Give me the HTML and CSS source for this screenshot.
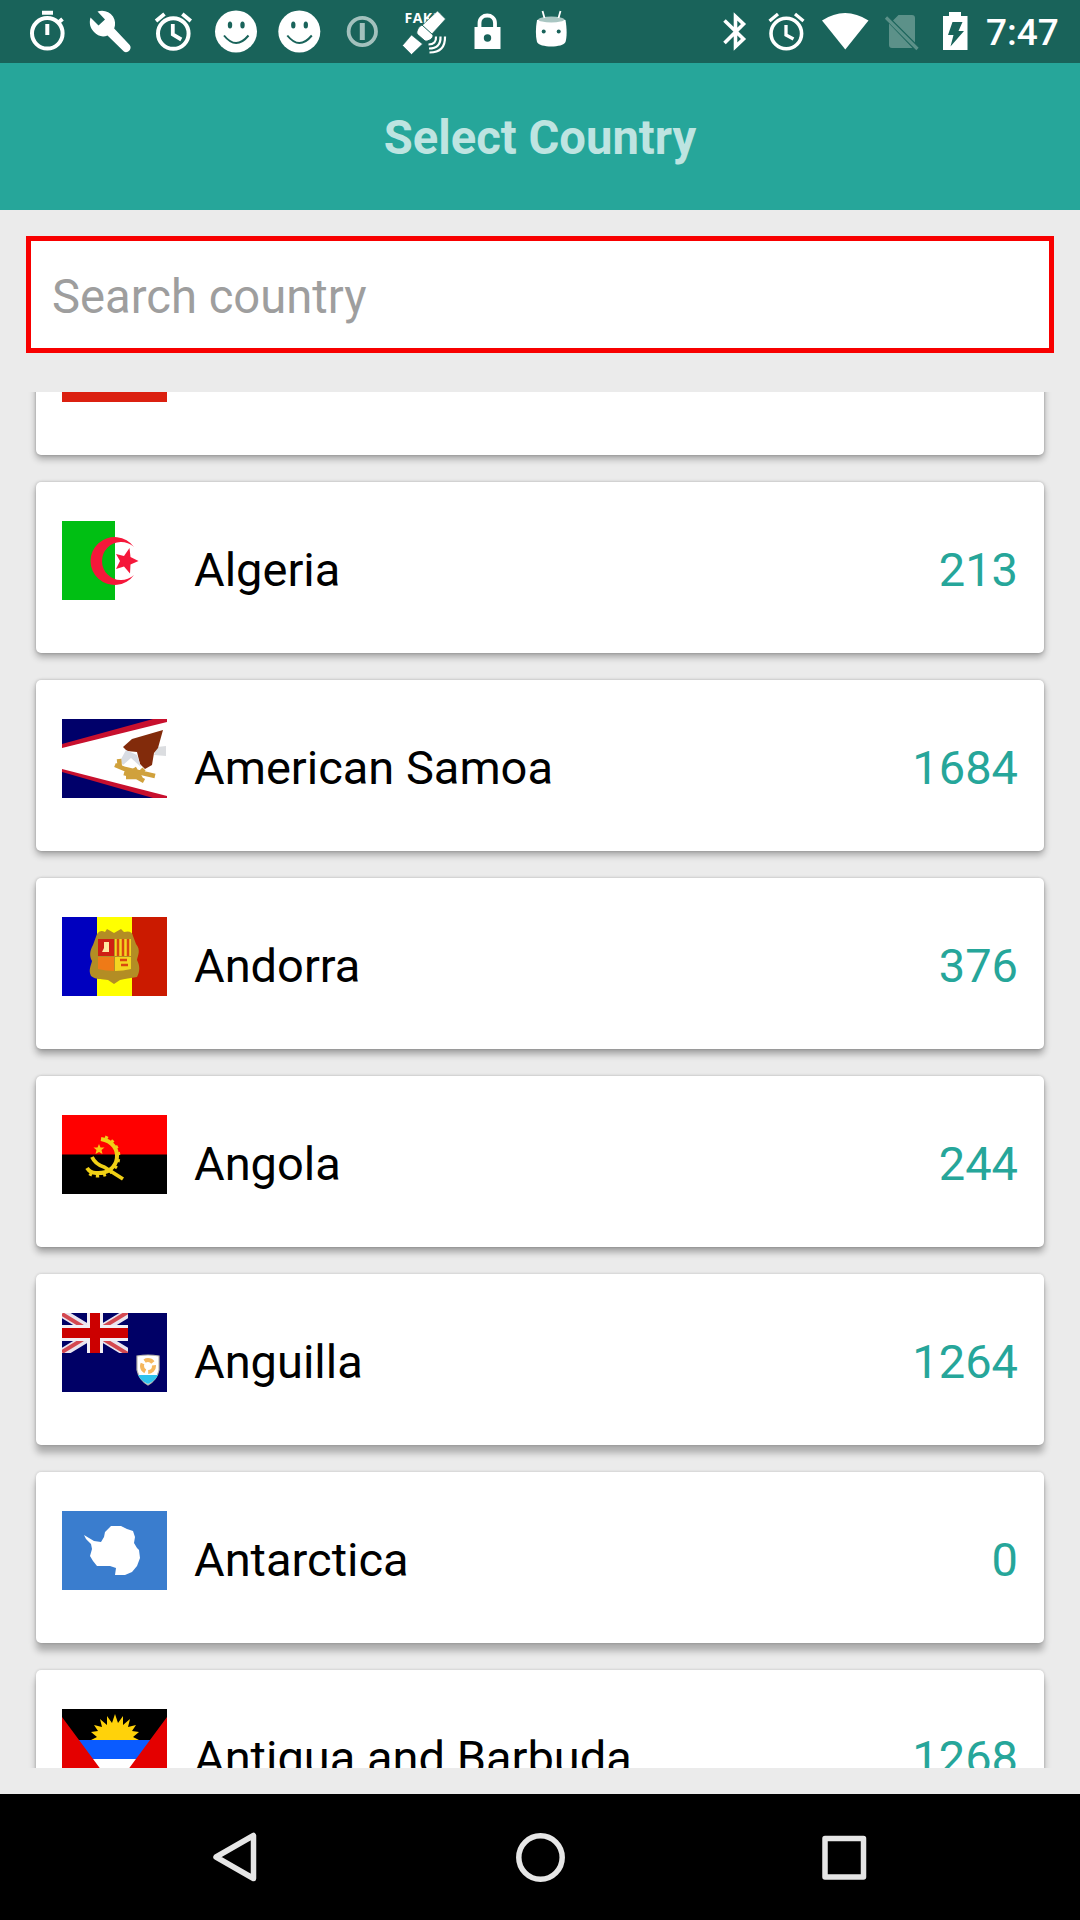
FILE: index.html
```html
<!DOCTYPE html>
<html lang="en">
<head>
<meta charset="utf-8">
<title>Select Country</title>
<link rel="stylesheet" href="styles.css">
</head>
<body>
<div class="statusbar">
  <div class="notifications">
    <svg viewBox="16 0 63 63" fill="none" stroke="#fff"><circle cx="47.3" cy="33.3" r="15.3" stroke-width="4"/><path d="M42 12.8h11M47.3 24v11M59 22l3.500-3" stroke-width="4"/></svg>
    <svg viewBox="79 0 63 63"><path fill="#fff" d="M97.500 11.500c6-2 12 0 15.500 5 2.400 4 2.700 8 1.200 12l15.500 16.500c3 3.500-2 9-5.800 6.500L107.500 35.500c-5 2-10 .5-13.500-3.500-4-4.300-5-9-3.500-14.500l8 8 6.500-6z"/></svg>
    <svg viewBox="142 0 63 63" fill="none" stroke="#fff"><circle cx="173.300" cy="33.500" r="15.300" stroke-width="4"/><path d="M172.800 24v10.500l8.500 5M156 21l8.500-7M190.800 21l-8.500-7" stroke-width="3.800"/></svg>
    <svg viewBox="205 0 63 63"><circle cx="236" cy="31.500" r="21" fill="#fff"/><g fill="#19635a"><ellipse cx="230" cy="25" rx="2.200" ry="3.500"/><ellipse cx="242.500" cy="25" rx="2.200" ry="3.500"/></g><path d="M224 35.500q12 15 24.500 0" fill="none" stroke="#19635a" stroke-width="2"/></svg>
    <svg viewBox="268 0 63 63"><circle cx="299.300" cy="31.500" r="21" fill="#fff"/><g fill="#19635a"><ellipse cx="293.300" cy="25" rx="2.200" ry="3.500"/><ellipse cx="305.800" cy="25" rx="2.200" ry="3.500"/></g><path d="M287.300 35.500q12 15 24.500 0" fill="none" stroke="#19635a" stroke-width="2"/></svg>
    <svg viewBox="331 0 63 63" fill="none" stroke="#a3c1bd"><circle cx="362.300" cy="31.500" r="13.700" stroke-width="3.800"/><path d="M362.300 23v17" stroke-width="5"/></svg>
    <svg viewBox="394 0 63 63"><text class="fake" x="404.500" y="23" textLength="36">FAKE</text><g stroke="#19635a" fill="#fff"><path d="M437.500 11l8 8-14.500 16-9.500-9zM411.500 35l11 9-11 10.500-9-9z" stroke-width=".6"/><path d="M422 25l11 10c1 3-5 7-8 6l-8-7c-1-3 2-8 5-9z" stroke-width="1"/></g><path d="M428.500 44.500q8 0 7.500-8M429 48.500q12 0 11.500-12M429.500 52.500q16 0 15.500-16" fill="none" stroke="#fff" stroke-width="2.200"/></svg>
    <svg viewBox="457 0 63 63"><path d="M479.500 29v-6c0-10 15.500-10 15.500 0v6" fill="none" stroke="#fff" stroke-width="3.800"/><path d="M474.500 27h26v22h-26z" fill="#fff"/><circle cx="487.500" cy="38" r="3.700" fill="#19635a"/></svg>
    <svg viewBox="520 0 63 63"><path d="M537 20q14.500-5 28.500 0c1.500 9 1.500 17 0 22-2.500 6-26 6-28.500 0-1.500-6-1.500-14 0-22z" fill="#fff"/><ellipse cx="551.300" cy="19.500" rx="13" ry="3" fill="#a9c6c2"/><path d="M544.500 18l-2-7M558.500 18l2-7" stroke="#fff" stroke-width="1.800"/><g fill="#19635a"><circle cx="543.700" cy="31.500" r="2"/><circle cx="558.700" cy="31.500" r="2"/></g></svg>
  </div>
  <div class="system">
    <svg class="w50" viewBox="710 0 50 63" fill="none" stroke="#fff" stroke-width="3.600"><path d="M724.500 20.500L743.500 39l-8 7.500v-30l8 7.500-19 19"/></svg>
    <svg class="w52" viewBox="760 0 52 63" fill="none" stroke="#fff"><circle cx="786.300" cy="33.500" r="15.300" stroke-width="3.600"/><path d="M786 25v10l7.500 4M769.500 21l8.500-7M803.500 21l-8.500-7" stroke-width="3.300"/></svg>
    <svg class="w64" viewBox="812 0 64 63"><path d="M822 20.500q23-15 46.500 0L845.300 49.500z" fill="#fff"/></svg>
    <svg class="w54" viewBox="876 0 54 63"><path d="M898.500 15H912q3 0 3 3v24.500L893 20.500zM889 23.500L912.500 48H892q-3 0-3-3z" fill="#5c9189"/><path d="M886 17.500l31.500 31.500" stroke="#5c9189" stroke-width="3.200"/></svg>
    <svg class="w50" viewBox="930 0 50 63"><path d="M943 16h6v-4h12v4h6.500v34H943z" fill="#fff"/><path d="M952.500 22h10l-4 9h5.500l-13.500 15.500 3-11.500H948z" fill="#19635a"/></svg>
    <span class="clock">7:47</span>
  </div>
</div>
<header class="header">Select Country</header>
<main class="content">
  <input class="search" type="text" placeholder="Search country">
  <div class="list">
    <div class="track">
      <div class="card"><svg class="flag" viewBox="0 0 105 79"><path fill="#db2010" d="M0 0h105v79H0z"/></svg></div>
      <div class="card">
        <svg class="flag" viewBox="0 0 105 79"><path fill="#fff" d="M0 0h105v79H0z"/><path fill="#00bf13" d="M0 0h53v79H0z"/><path fill="#f5173a" d="M72 26A24 24 0 1 0 72 54A19.060 19.060 0 1 1 72 26zM67.500 27l1 9 8 4-8 3.500-.5 9-6-7-8 2.500 4-8-4-7 8 2z"/></svg>
        <span class="name">Algeria</span><span class="code">213</span>
      </div>
      <div class="card">
        <svg class="flag" viewBox="0 0 105 79"><path fill="#00006a" d="M0 0h105v79H0z"/><path fill="#c8102e" d="M105 0H91L0 25v28l91 26h14z"/><path fill="#fff" d="M105 3L0 29v21l105 27z"/><path fill="#dbdde0" d="M95 28l9-1v10l-12-1z"/><path fill="#822b0b" d="M101 11L96 29 92 34 90 46 83 50 78 45 75 33 65 32 61 28 70 20z"/><path fill="#d8dce3" d="M64 31l11 5 4 12-10-9-8 7-3-4z"/><path fill="none" stroke="#d0a13c" stroke-width="4.500" d="M53 46l10 4 30 7M62 54l11 3 9 5M64 58l10 0 8-8M72 49l7 11M57 40l1 9"/></svg>
        <span class="name">American Samoa</span><span class="code">1684</span>
      </div>
      <div class="card">
        <svg class="flag" viewBox="0 0 105 79"><path fill="#0000bf" d="M0 0h35v79H0z"/><path fill="#ff0" d="M35 0h35v79H35z"/><path fill="#cb1a00" d="M70 0h35v79H70z"/><path fill="#b38d24" d="M35 17q3-5 8-2l2-3 7 4 7-4 3 3q8-2 9 4l3 8c5 6 2 11 1 16 3 6 3 11 0 17-6 1-13 2-17 3l-6 4-6-4c-5-1-12 0-17-4-3-6 0-10 1-15-3-5-2-11 1-16z"/><path fill="#cf1e13" d="M36 22h16v17H36z"/><path fill="#f4d521" d="M53 22h16v17H53zM53 40h16v12q-8 2-16 2z"/><path fill="#ef7a17" d="M36 40h16v14q-8 0-16-2z"/><path stroke="#d9480f" stroke-width="2.500" d="M56 22v17M61 22v17M66 22v17"/><path fill="none" stroke="#d9480f" stroke-width="2.500" d="M58 43h7M59 48h7"/><path fill="#ffe9a1" d="M42 25h5v10h-7l2-4z"/></svg>
        <span class="name">Andorra</span><span class="code">376</span>
      </div>
      <div class="card">
        <svg class="flag" viewBox="0 0 105 79"><path fill="#f00" d="M0 0h105v40H0z"/><path d="M0 39.500h105V79H0z"/><g fill="none" stroke="#f0d016"><path stroke-width="4" d="M39 24c24 4 20 36-5 34-4 0-7-2-9-5"/><path stroke-width="3.800" d="M30 42q3 7 12 10l19 12"/><path stroke-width="3" stroke-dasharray="3 4" d="M43 22c21 8 18 39-8 39-5 0-8-2-10-4"/></g><path fill="#f9c816" d="M37 29l1.500 3.500h4l-3 2.500 1 4-3.500-2-3.500 2 1-4-3-2.500h4z"/></svg>
        <span class="name">Angola</span><span class="code">244</span>
      </div>
      <div class="card">
        <svg class="flag" viewBox="0 0 105 79"><path fill="#006" d="M0 0h105v79H0z"/><svg width="66" height="40" viewBox="0 0 66 40"><path stroke="#e9e4ef" stroke-width="9" d="M0 0l66 40M66 0L0 40"/><path stroke="#d44850" stroke-width="4" d="M0 1l66 40M66-1L0 39"/><path stroke="#f2eef4" stroke-width="16" d="M33 0v40M0 20h66"/><path stroke="#c00" stroke-width="10" d="M33 0v40M0 20h66"/></svg><path fill="#fff" stroke="#b9b6ae" stroke-width="1.200" d="M75 43q11-2 22 0v14q-2 10-11 15-9-5-11-15z"/><path fill="#2fc3ee" d="M76 62h20q-3 6-10 9-7-3-10-9z"/><circle cx="86" cy="53" r="6" fill="none" stroke="#f5b75d" stroke-width="4" stroke-dasharray="9 3"/></svg>
        <span class="name">Anguilla</span><span class="code">1264</span>
      </div>
      <div class="card">
        <svg class="flag" viewBox="0 0 105 79"><path fill="#3a7dce" d="M0 0h105v79H0z"/><path fill="#fff" d="M22 24l10 6 7 1 3-5 1-5 6-6 10 0 6 3 6 2 2 6-1 6 3 5 2 2 1 8-3 8-5 6-7 3H53l1-7-6-2H35l-4-5-3-5 2-7-1-5-5-5z"/></svg>
        <span class="name">Antarctica</span><span class="code">0</span>
      </div>
      <div class="card">
        <svg class="flag" viewBox="0 0 105 79"><path d="M0 0h105v79H0z"/><path fill="#ffd20a" d="M29 31l6-3-6-5 7-1-4-6 8 2-2-8 7 6 0-9 5 7 3-9 3 9 5-7 0 9 7-6-2 8 8-2-4 6 7 1-6 5 6 3z"/><path fill="#0a5bff" d="M10 31h85v19H10z"/><path fill="#fff" d="M26 50h53v29H26z"/><path fill="#e40000" d="M0 8l52.500 71H0zM105 8l-52.500 71H105z"/></svg>
        <span class="name">Antigua and Barbuda</span><span class="code">1268</span>
      </div>
    </div>
  </div>
</main>
<nav class="navbar">
  <svg viewBox="0 0 60 60"><path d="M2.500 30L40 8.500v43z" transform="translate(7.500 0)"/></svg>
  <svg viewBox="0 0 60 60"><circle cx="30.500" cy="30.500" r="21.700"/></svg>
  <svg viewBox="0 0 60 60"><path d="M11 11.500h38.500v38.500h-38.500z"/></svg>
</nav>
</body>
</html>
```
FILE: styles.css
```css
* { box-sizing: border-box; }

body {
  margin: 0;
  width: 1080px;
  height: 1920px;
  overflow: hidden;
  display: flex;
  flex-direction: column;
  background: #ebebeb;
  font-family: Roboto, "Liberation Sans", sans-serif;
  color: #000;
}

svg { display: block; flex: none; }

.statusbar {
  height: 63px;
  flex: none;
  display: flex;
  justify-content: space-between;
  padding: 0 0 0 16px;
  background: #19635a;
}

.notifications,
.system { display: flex; }

.notifications svg { width: 63px; height: 63px; }

.fake {
  font: bold 14px "Open Sans", sans-serif;
  fill: #fff;
}

.system svg { height: 63px; }
.w50 { width: 50px; }
.w52 { width: 52px; }
.w54 { width: 54px; }
.w64 { width: 64px; }

.clock {
  width: 100px;
  padding-left: 6px;
  font-size: 37px;
  font-weight: 500;
  line-height: 66px;
  color: #fff;
}

.header {
  height: 147px;
  flex: none;
  background: #26a69a;
  color: #bee4e1;
  font-size: 47.200px;
  font-weight: 700;
  line-height: 151px;
  text-align: center;
}

.content {
  height: 1584px;
  flex: none;
  display: flex;
  flex-direction: column;
  padding: 26px 26px 26px;
}

.search {
  width: 100%;
  height: 117px;
  flex: none;
  margin: 0 0 39px;
  padding: 4px 21px 0;
  border: 5px solid #f80000;
  border-radius: 0;
  outline: 0;
  background: #fff;
  font: 47.200px Roboto, "Liberation Sans", sans-serif;
}

.search::placeholder { color: #9e9e9e; opacity: 1; }

.list {
  flex: 1;
  min-height: 0;
  overflow: hidden;
  padding: 0 10px;
}

/* scrolled so that the first card is partly hidden */
.track {
  display: flex;
  flex-direction: column;
  gap: 27px;
  margin-top: -108px;
}

.card {
  height: 171px;
  flex: none;
  display: flex;
  align-items: flex-start;
  padding: 39px 26px 0;
  border-radius: 5px;
  background: #fff;
  box-shadow: 0 0 3px rgba(0, 0, 0, .22), 0 4px 7px rgba(0, 0, 0, .3);
}

.card:nth-child(n+4) { box-shadow: 0 0 3px rgba(0, 0, 0, .22), 0 5px 7px rgba(0, 0, 0, .32); }
.card:nth-child(n+6) { box-shadow: 0 0 3px rgba(0, 0, 0, .2), 0 8px 7px rgba(0, 0, 0, .27); }

.flag { width: 105px; height: 79px; }

.name,
.code {
  padding-top: 21px;
  font-size: 47px;
  line-height: 56px;
  white-space: nowrap;
}

.name { flex: 1; margin-left: 27px; }
.code { color: #26a69a; }

.navbar {
  height: 126px;
  flex: none;
  display: flex;
  justify-content: center;
  gap: 244px;
  padding-top: 33px;
  background: #000;
}

.navbar svg {
  width: 60px;
  height: 60px;
  fill: none;
  stroke: #e6e6e6;
  stroke-width: 5.500;
  stroke-linejoin: round;
}
```
